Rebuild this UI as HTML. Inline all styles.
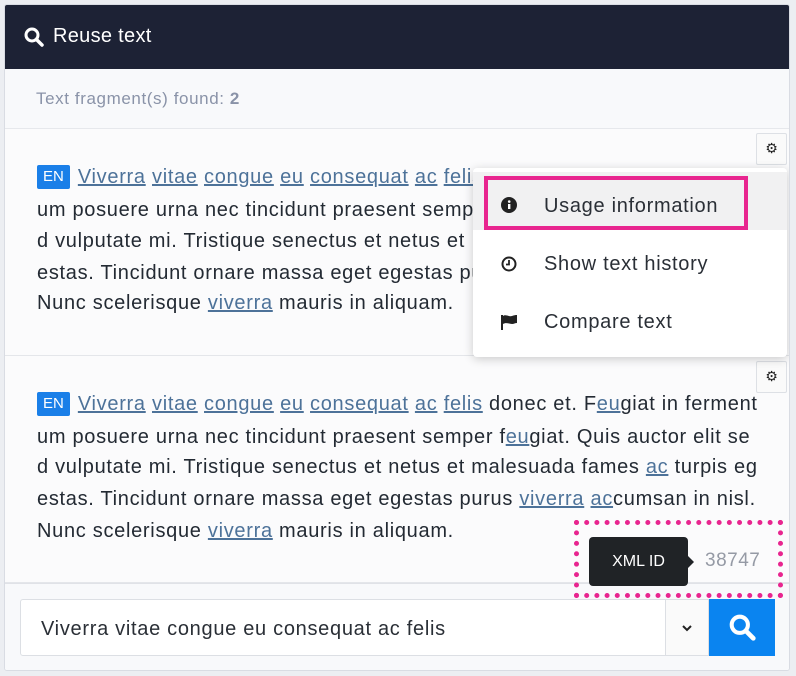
<!DOCTYPE html>
<html><head><meta charset="utf-8"><style>
*{box-sizing:border-box;margin:0;padding:0}
body{width:796px;height:676px;background:#eceef2;font-family:"Liberation Sans",sans-serif;position:relative;overflow:hidden}
.card{position:absolute;left:4px;top:4px;width:786px;height:667px;background:#fff;border:1px solid #d9dce3;border-radius:3px;overflow:hidden}
.hdr{position:absolute;left:0;top:0;width:100%;height:64px;background:#1d2235;color:#fff;font-size:20px;letter-spacing:0.3px}
.hdr span{position:absolute;left:48px;top:20px}
.found{position:absolute;left:0;top:64px;width:100%;height:60px;background:#f8f9fb;border-bottom:1px solid #e6e8ec;color:#8a93a8;font-size:17px;letter-spacing:0.6px}
.found span{position:absolute;left:31px;top:20px}
.sec{position:absolute;left:0;width:100%;background:#fbfbfc;border-bottom:1px solid #e4e6ea}
.ln{position:absolute;left:32px;font-size:20px;letter-spacing:0.7px;color:#232a33;white-space:nowrap;line-height:24px}
.ln a{color:#4d7299;text-decoration:underline}
.en{display:inline-block;background:#1a7fe8;color:#fff;font-size:15px;letter-spacing:0;padding:0 6px;border-radius:2px;line-height:24px;margin-right:8px;vertical-align:top}
.gear{position:absolute;left:751px;width:31px;height:32px;border:1px solid #dde0e5;background:#fafafa;border-radius:2px;font-family:"DejaVu Sans",sans-serif;font-size:14px;text-align:center;line-height:30px;color:#222}
.menu{position:absolute;left:468px;top:163px;width:314px;height:189px;background:#fff;border-radius:4px;box-shadow:0 2px 10px rgba(0,0,0,.2)}
.it{position:absolute;left:0;width:100%;height:58px;font-size:20px;letter-spacing:0.7px;color:#2a2f36}
.it span{position:absolute;left:71px;top:22px}
.it svg{position:absolute;left:28px;top:25px}
.foot{position:absolute;left:0;top:578px;width:100%;height:89px;background:#f8f9fb;border-top:1px solid #e0e2e7}
</style></head><body>
<div class="card">
<div class="hdr"><svg style="position:absolute;left:19px;top:22px" width="20" height="20" viewBox="0 0 20 20"><circle cx="8" cy="8" r="6" fill="none" stroke="#fff" stroke-width="3"/><line x1="12.5" y1="12.5" x2="18" y2="18" stroke="#fff" stroke-width="3.5" stroke-linecap="round"/></svg><span>Reuse text</span></div>
<div class="found"><span>Text fragment(s) found: <b>2</b></span></div>

<div class="sec" style="top:124px;height:227px"></div>
<div class="ln" style="top:160px"><span class="en">EN</span><a>Viverra</a> <a>vitae</a> <a>congue</a> <a>eu</a> <a>consequat</a> <a>ac</a> <a>felis</a></div>
<div class="ln" style="top:193px">um posuere urna nec tincidunt praesent semp</div>
<div class="ln" style="top:224px">d vulputate mi. Tristique senectus et netus et</div>
<div class="ln" style="top:256px">estas. Tincidunt ornare massa eget egestas pu</div>
<div class="ln" style="top:286px">Nunc scelerisque <a>viverra</a> mauris in aliquam.</div>
<div class="gear" style="top:128px">⚙</div>

<div class="sec" style="top:351px;height:227px"></div>
<div class="gear" style="top:356px">⚙</div>
<div class="ln" style="top:387px"><span class="en">EN</span><a>Viverra</a> <a>vitae</a> <a>congue</a> <a>eu</a> <a>consequat</a> <a>ac</a> <a>felis</a> donec et. F<a>eu</a>giat in ferment</div>
<div class="ln" style="top:420px">um posuere urna nec tincidunt praesent semper f<a>eu</a>giat. Quis auctor elit se</div>
<div class="ln" style="top:450px">d vulputate mi. Tristique senectus et netus et malesuada fames <a>ac</a> turpis eg</div>
<div class="ln" style="top:482px">estas. Tincidunt ornare massa eget egestas purus <a>viverra</a> <a>ac</a>cumsan in nisl.</div>
<div class="ln" style="top:514px">Nunc scelerisque <a>viverra</a> mauris in aliquam.</div>

<div class="foot">
<div style="position:absolute;left:15px;top:15px;width:646px;height:57px;background:#fff;border:1px solid #dcdfe4;border-radius:3px 0 0 3px;font-size:20px;letter-spacing:0.7px;color:#2a2f36;padding:18px 0 0 20px">Viverra vitae congue eu consequat ac felis</div>
<div style="position:absolute;left:660px;top:15px;width:44px;height:57px;background:#fafafa;border:1px solid #dcdfe4"><svg style="position:absolute;left:15px;top:24px" width="12" height="8" viewBox="0 0 12 8"><path d="M2 2l4 4 4-4" fill="none" stroke="#222" stroke-width="2"/></svg></div>
<div style="position:absolute;left:704px;top:15px;width:66px;height:57px;background:#0a84f0"><svg style="position:absolute;left:20px;top:15px" width="27" height="27" viewBox="0 0 20 20"><circle cx="8" cy="8" r="6" fill="none" stroke="#fff" stroke-width="3"/><line x1="12.5" y1="12.5" x2="18" y2="18" stroke="#fff" stroke-width="3.5" stroke-linecap="round"/></svg></div>
</div>

<div style="position:absolute;left:569px;top:515px;width:209px;height:78px;border:5px dotted #e8258f"></div>
<div style="position:absolute;left:584px;top:532px;width:99px;height:49px;background:#202326;border-radius:4px;color:#fff;font-size:16px;text-align:center;line-height:49px">XML ID</div>
<div style="position:absolute;left:683px;top:551px;border:6px solid transparent;border-left-color:#202326"></div>
<div style="position:absolute;left:700px;top:545px;color:#959aa5;font-size:19px;letter-spacing:0.5px">38747</div>

<div class="menu">
<div class="it" style="top:4px;background:#f1f1f2"><svg width="16" height="16" viewBox="0 0 16 16"><circle cx="8" cy="8" r="8" fill="#222"/><rect x="7" y="7" width="2.4" height="5" fill="#fff"/><circle cx="8.2" cy="4.6" r="1.3" fill="#fff"/></svg><span style="top:23px">Usage information</span></div>
<div style="position:absolute;left:11px;top:8px;width:264px;height:54px;border:4px solid #e8258f"></div>
<div class="it" style="top:63px"><svg width="16" height="16" viewBox="0 0 16 16"><circle cx="8" cy="8" r="6.5" fill="none" stroke="#222" stroke-width="2"/><path d="M8 4v4.5H5" fill="none" stroke="#222" stroke-width="1.8"/></svg><span>Show text history</span></div>
<div class="it" style="top:121px"><svg width="18" height="16" viewBox="0 0 18 16"><rect x="0" y="1" width="2" height="15" fill="#222"/><path d="M2 2c3-2 6 1 9 0s4-1 5-1v8c-2 0-3 1-5 1s-6-2-9 0z" fill="#222"/></svg><span>Compare text</span></div>
</div>
</div>
</body></html>
